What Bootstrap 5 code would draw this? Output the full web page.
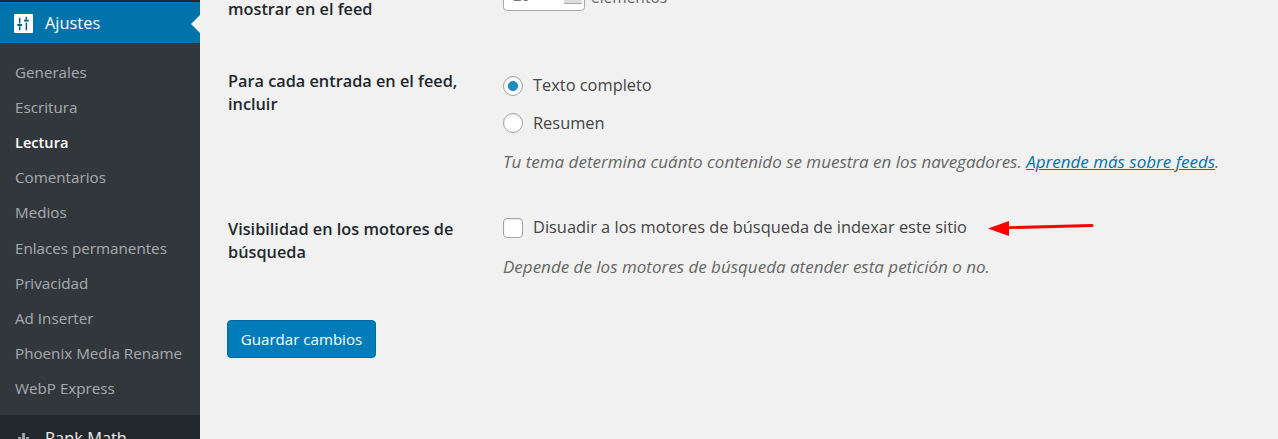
<!DOCTYPE html>
<html lang="es">
<head>
<meta charset="utf-8">
<title>Ajustes de lectura</title>
<link href="https://cdn.jsdelivr.net/npm/bootstrap@5.3.0/dist/css/bootstrap.min.css" rel="stylesheet">
<style>
html,body{height:439px;overflow:hidden;background:#f1f1f1}
body{font-family:"Open Sans",sans-serif;font-size:16.4px;color:#444}
.wp-shell{height:439px;overflow:hidden}
.wp-side{width:200px;flex:0 0 200px;background:#23282d;padding-top:2px;overflow:hidden}
.wp-current{height:41px;background:#0073aa;color:#fff;font-size:16.4px;padding:2px 0 0 14px;position:relative;gap:12px}
.wp-current::after{content:"";position:absolute;right:0;top:13px;border:9px solid transparent;border-right-color:#f1f1f1;border-left-width:0}
.wp-sub{background:#32373c;padding:11.7px 0 8px;height:372px}
.wp-sub a{display:block;height:35.2px;line-height:35px;padding-left:15px;color:rgba(240,245,250,.62);font-size:15.2px;text-decoration:none;white-space:nowrap}
.wp-sub a.wp-on{color:#fff;font-weight:600;font-size:14.6px}
.wp-next{color:#eee;font-size:16.4px;padding:13px 0 0 14px;gap:12px;height:50px;line-height:20px}
.wp-main{padding-left:27px;flex:1 1 auto;min-width:0}
.wp-form{margin-top:-6px}
.wp-row{display:flex}
.wp-th{width:275px;flex:0 0 275px;font-weight:600;color:#23282d;font-size:16.3px;line-height:23px;padding:3px 10px 0 1px}
.wp-td{flex:1 1 auto;min-width:0}
.wp-r1{height:73px}
.wp-r1 .wp-th{padding-top:4px}
.wp-r2{height:142px;align-items:flex-start}
.wp-r3{height:111px}
.wp-r3 .wp-th{padding-top:9px}
.wp-num{width:82px;height:29px;border:1px solid #aaa;border-radius:4px;background:#fff;margin:-12px 0 0 1px;font-size:15px;color:#777;padding-left:9px;line-height:25px;position:relative}
.wp-spin{position:absolute;right:2px;top:0;width:18px;height:21px;background:#ddd;border-bottom:1px solid #aaa}
.wp-numrow{gap:6px;color:#666;font-size:15.5px;line-height:18px}
.wp-numtext{margin-top:-6px}
.wp-opt{gap:10px;height:37.5px;color:#444;font-size:16.4px;white-space:nowrap}
.wp-radio,.wp-check{appearance:none;width:20px;height:20px;flex:0 0 20px;background:#fff;border:1px solid #a0a5aa;box-shadow:inset 0 1px 2px rgba(0,0,0,.1);margin:0 0 0 1px}
.wp-radio{border-radius:50%}
.wp-radio:checked{background:radial-gradient(circle,#1e8cbe 0 4.6px,#fff 5.4px)}
.wp-check{border-radius:4px}
.wp-desc{font-style:italic;color:#666;font-size:17px;line-height:20px;white-space:nowrap;margin:10px 0 0 1px}
.wp-desc a{color:#0073aa;text-decoration:underline}
.wp-save{background:#007cba;border:1px solid #006ba1;color:#fff;font-size:15.1px;height:38px;width:149px;padding:0;border-radius:4px;box-shadow:none}
.wp-save:hover{background:#0073aa;color:#fff}
.wp-arrow{margin-left:11px;flex:0 0 auto}
</style>
</head>
<body>
<div class="d-flex wp-shell">
  <aside class="wp-side">
    <div class="d-flex align-items-center wp-current">
      <svg width="19" height="19" viewBox="0 0 20 20" aria-hidden="true"><rect width="20" height="20" rx="1" fill="#fff"/><path d="M6 4v6M6 13v4M13 3v3M13 9v8" stroke="#0a5f88" stroke-width="1.6" fill="none"/><path d="M3.5 10.5h5v2h-5zM10.5 6h5v2h-5z" fill="#0a5f88"/></svg>
      <span>Ajustes</span>
    </div>
    <nav class="wp-sub">
      <a href="#">Generales</a>
      <a href="#">Escritura</a>
      <a href="#" class="wp-on">Lectura</a>
      <a href="#">Comentarios</a>
      <a href="#">Medios</a>
      <a href="#">Enlaces permanentes</a>
      <a href="#">Privacidad</a>
      <a href="#">Ad Inserter</a>
      <a href="#">Phoenix Media Rename</a>
      <a href="#">WebP Express</a>
    </nav>
    <div class="d-flex wp-next">
      <svg width="19" height="19" viewBox="0 0 19 19" aria-hidden="true"><path d="M0 13h3v6H0zM4 9h3v10H4zM8 5h3v14H8zM12 9h3v10h-3zM16 13h3v6h-3z" fill="#9ea3a8"/></svg>
      <span>Rank Math</span>
    </div>
  </aside>
  <main class="wp-main">
    <form class="wp-form">
      <div class="wp-row wp-r1">
        <div class="wp-th">mostrar en el feed</div>
        <div class="wp-td"><div class="d-flex wp-numrow"><div class="wp-num">20<span class="wp-spin"></span></div><span class="wp-numtext">elementos</span></div></div>
      </div>
      <div class="wp-row wp-r2">
        <div class="wp-th">Para cada entrada en el feed, incluir</div>
        <div class="wp-td">
          <label class="d-flex align-items-center wp-opt"><input class="wp-radio" type="radio" name="feed" checked><span>Texto completo</span></label>
          <label class="d-flex align-items-center wp-opt"><input class="wp-radio" type="radio" name="feed"><span>Resumen</span></label>
          <p class="wp-desc mb-0">Tu tema determina cuánto contenido se muestra en los navegadores. <a href="#">Aprende más sobre feeds</a>.</p>
        </div>
      </div>
      <div class="wp-row wp-r3">
        <div class="wp-th">Visibilidad en los motores de búsqueda</div>
        <div class="wp-td">
          <div class="d-flex align-items-center wp-opt">
            <input class="wp-check" type="checkbox" id="blog-vis">
            <label for="blog-vis">Disuadir a los motores de búsqueda de indexar este sitio</label>
            <svg class="wp-arrow" width="106" height="16" viewBox="0 0 106 16" aria-hidden="true"><path d="M0 8.5 21 1v5.2l83-2.2a1.5 1.5 0 0 1 0 3l-83 2.1V16z" fill="#f00"/></svg>
          </div>
          <p class="wp-desc mb-0">Depende de los motores de búsqueda atender esta petición o no.</p>
        </div>
      </div>
      <button type="button" class="btn wp-save">Guardar cambios</button>
    </form>
  </main>
</div>
<script src="https://cdn.jsdelivr.net/npm/bootstrap@5.3.0/dist/js/bootstrap.bundle.min.js"></script>
</body>
</html>
